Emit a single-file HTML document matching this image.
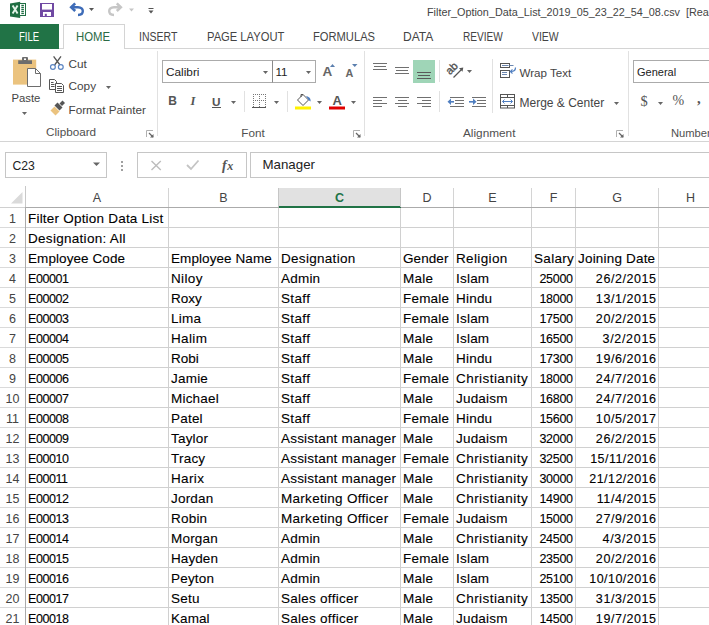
<!DOCTYPE html>
<html><head><meta charset="utf-8"><style>
html,body{margin:0;padding:0;}
body{width:709px;height:625px;overflow:hidden;position:relative;background:#fff;font-family:"Liberation Sans", sans-serif;}
.t{position:absolute;white-space:nowrap;font-family:"Liberation Sans", sans-serif;}
.c{-webkit-text-stroke:0.1px #000;}
.r{position:absolute;box-sizing:content-box;}
svg.ov{position:absolute;left:0;top:0;}
</style></head><body>
<div class="t" style="top:1.62px;height:20px;line-height:20px;font-size:11.5px;color:#444;left:426.5px;transform:scaleX(0.94);transform-origin:0 50%;">Filter_Option_Data_List_2019_05_23_22_54_08.csv&nbsp;&nbsp;[Read-Only] - Excel</div>
<div class="r" style="left:0px;top:48px;width:709px;height:1px;background:#D4D4D4;"></div>
<div class="r" style="left:0px;top:24px;width:59px;height:25px;background:#217346;"></div>
<div class="t" style="top:26.74px;height:20px;line-height:20px;font-size:12.3px;color:#fff;left:18.8px;transform:scaleX(0.777);transform-origin:0 50%;">FILE</div>
<div class="r" style="left:63px;top:24px;width:60px;height:24px;border:1px solid #D4D4D4;background:#fff;border-bottom:none;"></div>
<div class="t" style="top:26.74px;height:20px;line-height:20px;font-size:12.3px;color:#2B6A45;left:75.5px;transform:scaleX(0.924);transform-origin:0 50%;">HOME</div>
<div class="t" style="top:26.74px;height:20px;line-height:20px;font-size:12.3px;color:#444444;left:139.167px;transform:scaleX(0.854);transform-origin:0 50%;">INSERT</div>
<div class="t" style="top:26.74px;height:20px;line-height:20px;font-size:12.3px;color:#444444;left:207.112px;transform:scaleX(0.91);transform-origin:0 50%;">PAGE LAYOUT</div>
<div class="t" style="top:26.74px;height:20px;line-height:20px;font-size:12.3px;color:#444444;left:312.614px;transform:scaleX(0.908);transform-origin:0 50%;">FORMULAS</div>
<div class="t" style="top:26.74px;height:20px;line-height:20px;font-size:12.3px;color:#444444;left:402.545px;transform:scaleX(0.979);transform-origin:0 50%;">DATA</div>
<div class="t" style="top:26.74px;height:20px;line-height:20px;font-size:12.3px;color:#444444;left:462.698px;transform:scaleX(0.822);transform-origin:0 50%;">REVIEW</div>
<div class="t" style="top:26.74px;height:20px;line-height:20px;font-size:12.3px;color:#444444;left:531.672px;transform:scaleX(0.849);transform-origin:0 50%;">VIEW</div>
<div class="r" style="left:0px;top:141px;width:709px;height:1px;background:#D4D4D4;"></div>
<div class="t" style="top:87.68px;height:20px;line-height:20px;font-size:11.3px;color:#444444;left:11.5px;">Paste</div>
<div class="t" style="top:53.71px;height:20px;line-height:20px;font-size:11.8px;color:#444444;left:68.5px;">Cut</div>
<div class="t" style="top:76.41px;height:20px;line-height:20px;font-size:11.8px;color:#444444;left:68.5px;">Copy</div>
<div class="t" style="top:99.65px;height:20px;line-height:20px;font-size:11.7px;color:#444444;left:68.5px;">Format Painter</div>
<div class="t" style="top:122.45px;height:20px;line-height:20px;font-size:11.7px;color:#505050;left:46px;">Clipboard</div>
<div class="r" style="left:157px;top:51px;width:1px;height:85px;background:#E1E1E1;"></div>
<div class="r" style="left:162px;top:60px;width:109px;height:21px;border:1px solid #ABABAB;background:#fff;"></div>
<div class="r" style="left:272px;top:60px;width:42px;height:21px;border:1px solid #ABABAB;background:#fff;border-left-color:#8A8A8A;"></div>
<div class="t" style="top:61.61px;height:20px;line-height:20px;font-size:11.8px;color:#222;left:166px;">Calibri</div>
<div class="t" style="top:61.98px;height:20px;line-height:20px;font-size:11.6px;color:#222;left:275.5px;">11</div>
<div class="t" style="top:62.32px;height:20px;line-height:20px;font-size:13.5px;color:#666;font-weight:bold;left:322.5px;">A</div>
<div class="t" style="top:63.26px;height:20px;line-height:20px;font-size:10.8px;color:#666;font-weight:bold;left:345.5px;">A</div>
<div class="t" style="top:91.44px;height:20px;line-height:20px;font-size:12px;color:#555;font-weight:bold;left:168.3px;">B</div>
<div class="t" style="top:91.27px;height:20px;line-height:20px;font-size:12.5px;color:#555;font-family:'Liberation Serif', serif;left:190.5px;font-style:italic;font-weight:bold;">I</div>
<div class="t" style="top:91.51px;height:20px;line-height:20px;font-size:11.8px;color:#555;font-weight:bold;left:212px;">U</div>
<div class="r" style="left:212px;top:107px;width:9px;height:1px;background:#555;"></div>
<div class="r" style="left:244px;top:91px;width:1px;height:21px;background:#E1E1E1;"></div>
<div class="r" style="left:287px;top:91px;width:1px;height:21px;background:#E1E1E1;"></div>
<div class="t" style="top:91.10px;height:20px;line-height:20px;font-size:13px;color:#555;font-weight:bold;left:332.5px;">A</div>
<div class="t" style="top:122.65px;height:20px;line-height:20px;font-size:11.7px;color:#505050;left:241.3px;">Font</div>
<div class="r" style="left:364px;top:51px;width:1px;height:85px;background:#E1E1E1;"></div>
<div class="r" style="left:373px;top:63px;width:14px;height:1px;background:#707070;"></div>
<div class="r" style="left:374px;top:66px;width:12px;height:1px;background:#707070;"></div>
<div class="r" style="left:373px;top:69px;width:14px;height:1px;background:#707070;"></div>
<div class="r" style="left:395px;top:67px;width:14px;height:1px;background:#707070;"></div>
<div class="r" style="left:396px;top:70px;width:12px;height:1px;background:#707070;"></div>
<div class="r" style="left:395px;top:73px;width:14px;height:1px;background:#707070;"></div>
<div class="r" style="left:413px;top:60px;width:22px;height:23px;background:#9FD5B7;"></div>
<div class="r" style="left:417px;top:72px;width:14px;height:1px;background:#5A5A5A;"></div>
<div class="r" style="left:418px;top:75px;width:12px;height:1px;background:#5A5A5A;"></div>
<div class="r" style="left:417px;top:78px;width:14px;height:1px;background:#5A5A5A;"></div>
<div class="r" style="left:439px;top:60px;width:1px;height:22px;background:#E1E1E1;"></div>
<div class="r" style="left:373px;top:97px;width:14px;height:1px;background:#707070;"></div>
<div class="r" style="left:373px;top:100px;width:9px;height:1px;background:#707070;"></div>
<div class="r" style="left:373px;top:103px;width:14px;height:1px;background:#707070;"></div>
<div class="r" style="left:373px;top:106px;width:9px;height:1px;background:#707070;"></div>
<div class="r" style="left:395px;top:97px;width:14px;height:1px;background:#707070;"></div>
<div class="r" style="left:398px;top:100px;width:9px;height:1px;background:#707070;"></div>
<div class="r" style="left:395px;top:103px;width:14px;height:1px;background:#707070;"></div>
<div class="r" style="left:398px;top:106px;width:9px;height:1px;background:#707070;"></div>
<div class="r" style="left:417px;top:97px;width:14px;height:1px;background:#707070;"></div>
<div class="r" style="left:422px;top:100px;width:9px;height:1px;background:#707070;"></div>
<div class="r" style="left:417px;top:103px;width:14px;height:1px;background:#707070;"></div>
<div class="r" style="left:422px;top:106px;width:9px;height:1px;background:#707070;"></div>
<div class="r" style="left:439px;top:91px;width:1px;height:21px;background:#E1E1E1;"></div>
<div class="r" style="left:450px;top:97px;width:14px;height:1px;background:#707070;"></div>
<div class="r" style="left:455px;top:100px;width:9px;height:1px;background:#707070;"></div>
<div class="r" style="left:455px;top:103px;width:9px;height:1px;background:#707070;"></div>
<div class="r" style="left:450px;top:106px;width:14px;height:1px;background:#707070;"></div>
<div class="r" style="left:472px;top:97px;width:14px;height:1px;background:#707070;"></div>
<div class="r" style="left:477px;top:100px;width:9px;height:1px;background:#707070;"></div>
<div class="r" style="left:477px;top:103px;width:9px;height:1px;background:#707070;"></div>
<div class="r" style="left:472px;top:106px;width:14px;height:1px;background:#707070;"></div>
<div class="r" style="left:492px;top:59px;width:1px;height:54px;background:#E1E1E1;"></div>
<div class="t" style="top:62.58px;height:20px;line-height:20px;font-size:11.6px;color:#444444;left:519.5px;">Wrap Text</div>
<div class="t" style="top:93.34px;height:20px;line-height:20px;font-size:12px;color:#444444;left:519.5px;">Merge &amp; Center</div>
<div class="t" style="top:122.91px;height:20px;line-height:20px;font-size:11.8px;color:#505050;left:463px;">Alignment</div>
<div class="r" style="left:628px;top:51px;width:1px;height:85px;background:#E1E1E1;"></div>
<div class="r" style="left:633px;top:60px;width:126px;height:21px;border:1px solid #ABABAB;background:#fff;"></div>
<div class="t" style="top:61.99px;height:20px;line-height:20px;font-size:11px;color:#222;left:637px;">General</div>
<div class="t" style="top:90.98px;height:20px;line-height:20px;font-size:14.5px;color:#555;font-family:'Liberation Serif', serif;left:640.5px;">$</div>
<div class="t" style="top:90.95px;height:20px;line-height:20px;font-size:14px;color:#555;font-family:'Liberation Serif', serif;left:672.5px;">%</div>
<div class="t" style="top:87.80px;height:20px;line-height:20px;font-size:15px;color:#555;font-family:'Liberation Serif', serif;font-weight:bold;left:697px;">,</div>
<div class="t" style="top:122.72px;height:20px;line-height:20px;font-size:11.2px;color:#505050;left:671px;">Number</div>
<div class="r" style="left:5px;top:152px;width:100px;height:24px;border:1px solid #C6C6C6;background:#fff;"></div>
<div class="t" style="top:155.77px;height:20px;line-height:20px;font-size:12.2px;color:#222;left:12.5px;">C23</div>
<div class="r" style="left:121px;top:161px;width:2px;height:2px;background:#A0A0A0;"></div>
<div class="r" style="left:121px;top:165px;width:2px;height:2px;background:#A0A0A0;"></div>
<div class="r" style="left:121px;top:169px;width:2px;height:2px;background:#A0A0A0;"></div>
<div class="r" style="left:137px;top:152px;width:108px;height:24px;border:1px solid #C6C6C6;background:#fff;"></div>
<div class="t" style="left:222px;top:156px;height:20px;line-height:20px;font-family:'Liberation Serif',serif;font-style:italic;font-weight:bold;font-size:14px;color:#555">f<span style="font-size:12px;margin-left:0.5px">x</span></div>
<div class="r" style="left:250px;top:152px;width:509px;height:24px;border:1px solid #C6C6C6;background:#fff;"></div>
<div class="t" style="top:155.39px;height:20px;line-height:20px;font-size:13.3px;color:#222;left:262.5px;">Manager</div>
<div class="r" style="left:279px;top:188px;width:121px;height:18px;background:#E1E1E1;"></div>
<div class="r" style="left:279px;top:206px;width:122px;height:2px;background:#217346;"></div>
<div class="r" style="left:25px;top:207px;width:254px;height:1px;background:#ABABAB;"></div>
<div class="r" style="left:401px;top:207px;width:308px;height:1px;background:#ABABAB;"></div>
<div class="r" style="left:0px;top:207px;width:25px;height:1px;background:#D0D0D0;"></div>
<div class="r" style="left:168px;top:188px;width:1px;height:19px;background:#D4D4D4;"></div>
<div class="r" style="left:278px;top:188px;width:1px;height:19px;background:#C6C6C6;"></div>
<div class="r" style="left:400px;top:188px;width:1px;height:19px;background:#C6C6C6;"></div>
<div class="r" style="left:453px;top:188px;width:1px;height:19px;background:#D4D4D4;"></div>
<div class="r" style="left:531px;top:188px;width:1px;height:19px;background:#D4D4D4;"></div>
<div class="r" style="left:575px;top:188px;width:1px;height:19px;background:#D4D4D4;"></div>
<div class="r" style="left:658px;top:188px;width:1px;height:19px;background:#D4D4D4;"></div>
<div class="r" style="left:25px;top:186px;width:1px;height:21px;background:#C8C8C8;"></div>
<div class="r" style="left:25px;top:207px;width:1px;height:418px;background:#ABABAB;"></div>
<div class="t" style="top:187.67px;height:20px;line-height:20px;font-size:12.5px;color:#444;left:-3.0px;width:200px;text-align:center;">A</div>
<div class="t" style="top:187.67px;height:20px;line-height:20px;font-size:12.5px;color:#444;left:123.5px;width:200px;text-align:center;">B</div>
<div class="t" style="top:187.67px;height:20px;line-height:20px;font-size:12.5px;color:#217346;font-weight:bold;left:239.5px;width:200px;text-align:center;">C</div>
<div class="t" style="top:187.67px;height:20px;line-height:20px;font-size:12.5px;color:#444;left:327.0px;width:200px;text-align:center;">D</div>
<div class="t" style="top:187.67px;height:20px;line-height:20px;font-size:12.5px;color:#444;left:392.5px;width:200px;text-align:center;">E</div>
<div class="t" style="top:187.67px;height:20px;line-height:20px;font-size:12.5px;color:#444;left:453.5px;width:200px;text-align:center;">F</div>
<div class="t" style="top:187.67px;height:20px;line-height:20px;font-size:12.5px;color:#444;left:517.0px;width:200px;text-align:center;">G</div>
<div class="t" style="top:187.67px;height:20px;line-height:20px;font-size:12.5px;color:#444;left:590.5px;width:200px;text-align:center;">H</div>
<div class="r" style="left:0px;top:227px;width:25px;height:1px;background:#DADADA;"></div>
<div class="r" style="left:26px;top:227px;width:683px;height:1px;background:#D0D0D0;"></div>
<div class="r" style="left:0px;top:247px;width:25px;height:1px;background:#DADADA;"></div>
<div class="r" style="left:26px;top:247px;width:683px;height:1px;background:#D0D0D0;"></div>
<div class="r" style="left:0px;top:267px;width:25px;height:1px;background:#DADADA;"></div>
<div class="r" style="left:26px;top:267px;width:683px;height:1px;background:#D0D0D0;"></div>
<div class="r" style="left:0px;top:287px;width:25px;height:1px;background:#DADADA;"></div>
<div class="r" style="left:26px;top:287px;width:683px;height:1px;background:#D0D0D0;"></div>
<div class="r" style="left:0px;top:307px;width:25px;height:1px;background:#DADADA;"></div>
<div class="r" style="left:26px;top:307px;width:683px;height:1px;background:#D0D0D0;"></div>
<div class="r" style="left:0px;top:327px;width:25px;height:1px;background:#DADADA;"></div>
<div class="r" style="left:26px;top:327px;width:683px;height:1px;background:#D0D0D0;"></div>
<div class="r" style="left:0px;top:347px;width:25px;height:1px;background:#DADADA;"></div>
<div class="r" style="left:26px;top:347px;width:683px;height:1px;background:#D0D0D0;"></div>
<div class="r" style="left:0px;top:367px;width:25px;height:1px;background:#DADADA;"></div>
<div class="r" style="left:26px;top:367px;width:683px;height:1px;background:#D0D0D0;"></div>
<div class="r" style="left:0px;top:387px;width:25px;height:1px;background:#DADADA;"></div>
<div class="r" style="left:26px;top:387px;width:683px;height:1px;background:#D0D0D0;"></div>
<div class="r" style="left:0px;top:407px;width:25px;height:1px;background:#DADADA;"></div>
<div class="r" style="left:26px;top:407px;width:683px;height:1px;background:#D0D0D0;"></div>
<div class="r" style="left:0px;top:427px;width:25px;height:1px;background:#DADADA;"></div>
<div class="r" style="left:26px;top:427px;width:683px;height:1px;background:#D0D0D0;"></div>
<div class="r" style="left:0px;top:447px;width:25px;height:1px;background:#DADADA;"></div>
<div class="r" style="left:26px;top:447px;width:683px;height:1px;background:#D0D0D0;"></div>
<div class="r" style="left:0px;top:467px;width:25px;height:1px;background:#DADADA;"></div>
<div class="r" style="left:26px;top:467px;width:683px;height:1px;background:#D0D0D0;"></div>
<div class="r" style="left:0px;top:487px;width:25px;height:1px;background:#DADADA;"></div>
<div class="r" style="left:26px;top:487px;width:683px;height:1px;background:#D0D0D0;"></div>
<div class="r" style="left:0px;top:507px;width:25px;height:1px;background:#DADADA;"></div>
<div class="r" style="left:26px;top:507px;width:683px;height:1px;background:#D0D0D0;"></div>
<div class="r" style="left:0px;top:527px;width:25px;height:1px;background:#DADADA;"></div>
<div class="r" style="left:26px;top:527px;width:683px;height:1px;background:#D0D0D0;"></div>
<div class="r" style="left:0px;top:547px;width:25px;height:1px;background:#DADADA;"></div>
<div class="r" style="left:26px;top:547px;width:683px;height:1px;background:#D0D0D0;"></div>
<div class="r" style="left:0px;top:567px;width:25px;height:1px;background:#DADADA;"></div>
<div class="r" style="left:26px;top:567px;width:683px;height:1px;background:#D0D0D0;"></div>
<div class="r" style="left:0px;top:587px;width:25px;height:1px;background:#DADADA;"></div>
<div class="r" style="left:26px;top:587px;width:683px;height:1px;background:#D0D0D0;"></div>
<div class="r" style="left:0px;top:607px;width:25px;height:1px;background:#DADADA;"></div>
<div class="r" style="left:26px;top:607px;width:683px;height:1px;background:#D0D0D0;"></div>
<div class="r" style="left:0px;top:627px;width:25px;height:1px;background:#DADADA;"></div>
<div class="r" style="left:26px;top:627px;width:683px;height:1px;background:#D0D0D0;"></div>
<div class="r" style="left:168px;top:208px;width:1px;height:417px;background:#D0D0D0;"></div>
<div class="r" style="left:278px;top:208px;width:1px;height:417px;background:#D0D0D0;"></div>
<div class="r" style="left:400px;top:208px;width:1px;height:417px;background:#D0D0D0;"></div>
<div class="r" style="left:453px;top:208px;width:1px;height:417px;background:#D0D0D0;"></div>
<div class="r" style="left:531px;top:208px;width:1px;height:417px;background:#D0D0D0;"></div>
<div class="r" style="left:575px;top:208px;width:1px;height:417px;background:#D0D0D0;"></div>
<div class="r" style="left:658px;top:208px;width:1px;height:417px;background:#D0D0D0;"></div>
<div class="t" style="top:208.67px;height:20px;line-height:20px;font-size:12.5px;color:#444;left:-87.5px;width:200px;text-align:center;">1</div>
<div class="t" style="top:209.02px;height:20px;line-height:20px;font-size:13.5px;color:#000;letter-spacing:0.21px;left:28px;-webkit-text-stroke:0.1px #000;">Filter Option Data List</div>
<div class="t" style="top:228.67px;height:20px;line-height:20px;font-size:12.5px;color:#444;left:-87.5px;width:200px;text-align:center;">2</div>
<div class="t" style="top:229.02px;height:20px;line-height:20px;font-size:13.5px;color:#000;letter-spacing:0.291px;left:28px;-webkit-text-stroke:0.1px #000;">Designation: All</div>
<div class="t" style="top:248.67px;height:20px;line-height:20px;font-size:12.5px;color:#444;left:-87.5px;width:200px;text-align:center;">3</div>
<div class="t" style="top:249.02px;height:20px;line-height:20px;font-size:13.5px;color:#000;letter-spacing:0.084px;left:28px;-webkit-text-stroke:0.1px #000;">Employee Code</div>
<div class="t" style="top:249.02px;height:20px;line-height:20px;font-size:13.5px;color:#000;letter-spacing:0.084px;left:171px;-webkit-text-stroke:0.1px #000;">Employee Name</div>
<div class="t" style="top:249.02px;height:20px;line-height:20px;font-size:13.5px;color:#000;letter-spacing:0.295px;left:281px;-webkit-text-stroke:0.1px #000;">Designation</div>
<div class="t" style="top:249.02px;height:20px;line-height:20px;font-size:13.5px;color:#000;letter-spacing:0.08px;left:403px;-webkit-text-stroke:0.1px #000;">Gender</div>
<div class="t" style="top:249.02px;height:20px;line-height:20px;font-size:13.5px;color:#000;letter-spacing:0.357px;left:456px;-webkit-text-stroke:0.1px #000;">Religion</div>
<div class="t" style="top:249.02px;height:20px;line-height:20px;font-size:13.5px;color:#000;letter-spacing:0.32px;left:534px;-webkit-text-stroke:0.1px #000;">Salary</div>
<div class="t" style="top:249.02px;height:20px;line-height:20px;font-size:13.5px;color:#000;letter-spacing:0.187px;left:578px;-webkit-text-stroke:0.1px #000;">Joining Date</div>
<div class="t" style="top:268.67px;height:20px;line-height:20px;font-size:12.5px;color:#444;left:-87.5px;width:200px;text-align:center;">4</div>
<div class="t" style="top:268.67px;height:20px;line-height:20px;font-size:12.5px;color:#000;letter-spacing:-0.45px;left:28px;-webkit-text-stroke:0.1px #000;">E00001</div>
<div class="t" style="top:269.02px;height:20px;line-height:20px;font-size:13.5px;color:#000;letter-spacing:0.362px;left:171px;-webkit-text-stroke:0.1px #000;">Niloy</div>
<div class="t" style="top:269.02px;height:20px;line-height:20px;font-size:13.5px;color:#000;letter-spacing:0.212px;left:281px;-webkit-text-stroke:0.1px #000;">Admin</div>
<div class="t" style="top:269.02px;height:20px;line-height:20px;font-size:13.5px;color:#000;letter-spacing:0.233px;left:403px;-webkit-text-stroke:0.1px #000;">Male</div>
<div class="t" style="top:269.02px;height:20px;line-height:20px;font-size:13.5px;color:#000;letter-spacing:0.212px;left:456px;-webkit-text-stroke:0.1px #000;">Islam</div>
<div class="t" style="top:268.67px;height:20px;line-height:20px;font-size:12.5px;color:#000;letter-spacing:-0.29px;right:136px;margin-right:0.29px;-webkit-text-stroke:0.1px #000;">25000</div>
<div class="t" style="top:268.67px;height:20px;line-height:20px;font-size:12.5px;color:#000;letter-spacing:0.565px;right:53px;margin-right:-0.565px;-webkit-text-stroke:0.1px #000;">26/2/2015</div>
<div class="t" style="top:288.67px;height:20px;line-height:20px;font-size:12.5px;color:#444;left:-87.5px;width:200px;text-align:center;">5</div>
<div class="t" style="top:288.67px;height:20px;line-height:20px;font-size:12.5px;color:#000;letter-spacing:-0.45px;left:28px;-webkit-text-stroke:0.1px #000;">E00002</div>
<div class="t" style="top:289.02px;height:20px;line-height:20px;font-size:13.5px;color:#000;letter-spacing:0.033px;left:171px;-webkit-text-stroke:0.1px #000;">Roxy</div>
<div class="t" style="top:289.02px;height:20px;line-height:20px;font-size:13.5px;color:#000;letter-spacing:0.362px;left:281px;-webkit-text-stroke:0.1px #000;">Staff</div>
<div class="t" style="top:289.02px;height:20px;line-height:20px;font-size:13.5px;color:#000;letter-spacing:0.2px;left:403px;-webkit-text-stroke:0.1px #000;">Female</div>
<div class="t" style="top:289.02px;height:20px;line-height:20px;font-size:13.5px;color:#000;letter-spacing:0.212px;left:456px;-webkit-text-stroke:0.1px #000;">Hindu</div>
<div class="t" style="top:288.67px;height:20px;line-height:20px;font-size:12.5px;color:#000;letter-spacing:-0.29px;right:136px;margin-right:0.29px;-webkit-text-stroke:0.1px #000;">18000</div>
<div class="t" style="top:288.67px;height:20px;line-height:20px;font-size:12.5px;color:#000;letter-spacing:0.565px;right:53px;margin-right:-0.565px;-webkit-text-stroke:0.1px #000;">13/1/2015</div>
<div class="t" style="top:308.67px;height:20px;line-height:20px;font-size:12.5px;color:#444;left:-87.5px;width:200px;text-align:center;">6</div>
<div class="t" style="top:308.67px;height:20px;line-height:20px;font-size:12.5px;color:#000;letter-spacing:-0.45px;left:28px;-webkit-text-stroke:0.1px #000;">E00003</div>
<div class="t" style="top:309.02px;height:20px;line-height:20px;font-size:13.5px;color:#000;letter-spacing:0.233px;left:171px;-webkit-text-stroke:0.1px #000;">Lima</div>
<div class="t" style="top:309.02px;height:20px;line-height:20px;font-size:13.5px;color:#000;letter-spacing:0.362px;left:281px;-webkit-text-stroke:0.1px #000;">Staff</div>
<div class="t" style="top:309.02px;height:20px;line-height:20px;font-size:13.5px;color:#000;letter-spacing:0.2px;left:403px;-webkit-text-stroke:0.1px #000;">Female</div>
<div class="t" style="top:309.02px;height:20px;line-height:20px;font-size:13.5px;color:#000;letter-spacing:0.212px;left:456px;-webkit-text-stroke:0.1px #000;">Islam</div>
<div class="t" style="top:308.67px;height:20px;line-height:20px;font-size:12.5px;color:#000;letter-spacing:-0.29px;right:136px;margin-right:0.29px;-webkit-text-stroke:0.1px #000;">17500</div>
<div class="t" style="top:308.67px;height:20px;line-height:20px;font-size:12.5px;color:#000;letter-spacing:0.565px;right:53px;margin-right:-0.565px;-webkit-text-stroke:0.1px #000;">20/2/2015</div>
<div class="t" style="top:328.67px;height:20px;line-height:20px;font-size:12.5px;color:#444;left:-87.5px;width:200px;text-align:center;">7</div>
<div class="t" style="top:328.67px;height:20px;line-height:20px;font-size:12.5px;color:#000;letter-spacing:-0.45px;left:28px;-webkit-text-stroke:0.1px #000;">E00004</div>
<div class="t" style="top:329.02px;height:20px;line-height:20px;font-size:13.5px;color:#000;letter-spacing:0.362px;left:171px;-webkit-text-stroke:0.1px #000;">Halim</div>
<div class="t" style="top:329.02px;height:20px;line-height:20px;font-size:13.5px;color:#000;letter-spacing:0.362px;left:281px;-webkit-text-stroke:0.1px #000;">Staff</div>
<div class="t" style="top:329.02px;height:20px;line-height:20px;font-size:13.5px;color:#000;letter-spacing:0.233px;left:403px;-webkit-text-stroke:0.1px #000;">Male</div>
<div class="t" style="top:329.02px;height:20px;line-height:20px;font-size:13.5px;color:#000;letter-spacing:0.212px;left:456px;-webkit-text-stroke:0.1px #000;">Islam</div>
<div class="t" style="top:328.67px;height:20px;line-height:20px;font-size:12.5px;color:#000;letter-spacing:-0.29px;right:136px;margin-right:0.29px;-webkit-text-stroke:0.1px #000;">16500</div>
<div class="t" style="top:328.67px;height:20px;line-height:20px;font-size:12.5px;color:#000;letter-spacing:0.687px;right:53px;margin-right:-0.687px;-webkit-text-stroke:0.1px #000;">3/2/2015</div>
<div class="t" style="top:348.67px;height:20px;line-height:20px;font-size:12.5px;color:#444;left:-87.5px;width:200px;text-align:center;">8</div>
<div class="t" style="top:348.67px;height:20px;line-height:20px;font-size:12.5px;color:#000;letter-spacing:-0.45px;left:28px;-webkit-text-stroke:0.1px #000;">E00005</div>
<div class="t" style="top:349.02px;height:20px;line-height:20px;font-size:13.5px;color:#000;letter-spacing:0.033px;left:171px;-webkit-text-stroke:0.1px #000;">Robi</div>
<div class="t" style="top:349.02px;height:20px;line-height:20px;font-size:13.5px;color:#000;letter-spacing:0.362px;left:281px;-webkit-text-stroke:0.1px #000;">Staff</div>
<div class="t" style="top:349.02px;height:20px;line-height:20px;font-size:13.5px;color:#000;letter-spacing:0.233px;left:403px;-webkit-text-stroke:0.1px #000;">Male</div>
<div class="t" style="top:349.02px;height:20px;line-height:20px;font-size:13.5px;color:#000;letter-spacing:0.212px;left:456px;-webkit-text-stroke:0.1px #000;">Hindu</div>
<div class="t" style="top:348.67px;height:20px;line-height:20px;font-size:12.5px;color:#000;letter-spacing:-0.29px;right:136px;margin-right:0.29px;-webkit-text-stroke:0.1px #000;">17300</div>
<div class="t" style="top:348.67px;height:20px;line-height:20px;font-size:12.5px;color:#000;letter-spacing:0.565px;right:53px;margin-right:-0.565px;-webkit-text-stroke:0.1px #000;">19/6/2016</div>
<div class="t" style="top:368.67px;height:20px;line-height:20px;font-size:12.5px;color:#444;left:-87.5px;width:200px;text-align:center;">9</div>
<div class="t" style="top:368.67px;height:20px;line-height:20px;font-size:12.5px;color:#000;letter-spacing:-0.45px;left:28px;-webkit-text-stroke:0.1px #000;">E00006</div>
<div class="t" style="top:369.02px;height:20px;line-height:20px;font-size:13.5px;color:#000;letter-spacing:0.212px;left:171px;-webkit-text-stroke:0.1px #000;">Jamie</div>
<div class="t" style="top:369.02px;height:20px;line-height:20px;font-size:13.5px;color:#000;letter-spacing:0.362px;left:281px;-webkit-text-stroke:0.1px #000;">Staff</div>
<div class="t" style="top:369.02px;height:20px;line-height:20px;font-size:13.5px;color:#000;letter-spacing:0.2px;left:403px;-webkit-text-stroke:0.1px #000;">Female</div>
<div class="t" style="top:369.02px;height:20px;line-height:20px;font-size:13.5px;color:#000;letter-spacing:0.445px;left:456px;-webkit-text-stroke:0.1px #000;">Christianity</div>
<div class="t" style="top:368.67px;height:20px;line-height:20px;font-size:12.5px;color:#000;letter-spacing:-0.29px;right:136px;margin-right:0.29px;-webkit-text-stroke:0.1px #000;">18000</div>
<div class="t" style="top:368.67px;height:20px;line-height:20px;font-size:12.5px;color:#000;letter-spacing:0.565px;right:53px;margin-right:-0.565px;-webkit-text-stroke:0.1px #000;">24/7/2016</div>
<div class="t" style="top:388.67px;height:20px;line-height:20px;font-size:12.5px;color:#444;left:-87.5px;width:200px;text-align:center;">10</div>
<div class="t" style="top:388.67px;height:20px;line-height:20px;font-size:12.5px;color:#000;letter-spacing:-0.45px;left:28px;-webkit-text-stroke:0.1px #000;">E00007</div>
<div class="t" style="top:389.02px;height:20px;line-height:20px;font-size:13.5px;color:#000;letter-spacing:0.192px;left:171px;-webkit-text-stroke:0.1px #000;">Michael</div>
<div class="t" style="top:389.02px;height:20px;line-height:20px;font-size:13.5px;color:#000;letter-spacing:0.362px;left:281px;-webkit-text-stroke:0.1px #000;">Staff</div>
<div class="t" style="top:389.02px;height:20px;line-height:20px;font-size:13.5px;color:#000;letter-spacing:0.233px;left:403px;-webkit-text-stroke:0.1px #000;">Male</div>
<div class="t" style="top:389.02px;height:20px;line-height:20px;font-size:13.5px;color:#000;letter-spacing:0.192px;left:456px;-webkit-text-stroke:0.1px #000;">Judaism</div>
<div class="t" style="top:388.67px;height:20px;line-height:20px;font-size:12.5px;color:#000;letter-spacing:-0.29px;right:136px;margin-right:0.29px;-webkit-text-stroke:0.1px #000;">16800</div>
<div class="t" style="top:388.67px;height:20px;line-height:20px;font-size:12.5px;color:#000;letter-spacing:0.565px;right:53px;margin-right:-0.565px;-webkit-text-stroke:0.1px #000;">24/7/2016</div>
<div class="t" style="top:408.67px;height:20px;line-height:20px;font-size:12.5px;color:#444;left:-87.5px;width:200px;text-align:center;">11</div>
<div class="t" style="top:408.67px;height:20px;line-height:20px;font-size:12.5px;color:#000;letter-spacing:-0.45px;left:28px;-webkit-text-stroke:0.1px #000;">E00008</div>
<div class="t" style="top:409.02px;height:20px;line-height:20px;font-size:13.5px;color:#000;letter-spacing:0.212px;left:171px;-webkit-text-stroke:0.1px #000;">Patel</div>
<div class="t" style="top:409.02px;height:20px;line-height:20px;font-size:13.5px;color:#000;letter-spacing:0.362px;left:281px;-webkit-text-stroke:0.1px #000;">Staff</div>
<div class="t" style="top:409.02px;height:20px;line-height:20px;font-size:13.5px;color:#000;letter-spacing:0.2px;left:403px;-webkit-text-stroke:0.1px #000;">Female</div>
<div class="t" style="top:409.02px;height:20px;line-height:20px;font-size:13.5px;color:#000;letter-spacing:0.212px;left:456px;-webkit-text-stroke:0.1px #000;">Hindu</div>
<div class="t" style="top:408.67px;height:20px;line-height:20px;font-size:12.5px;color:#000;letter-spacing:-0.29px;right:136px;margin-right:0.29px;-webkit-text-stroke:0.1px #000;">15600</div>
<div class="t" style="top:408.67px;height:20px;line-height:20px;font-size:12.5px;color:#000;letter-spacing:0.565px;right:53px;margin-right:-0.565px;-webkit-text-stroke:0.1px #000;">10/5/2017</div>
<div class="t" style="top:428.67px;height:20px;line-height:20px;font-size:12.5px;color:#444;left:-87.5px;width:200px;text-align:center;">12</div>
<div class="t" style="top:428.67px;height:20px;line-height:20px;font-size:12.5px;color:#000;letter-spacing:-0.45px;left:28px;-webkit-text-stroke:0.1px #000;">E00009</div>
<div class="t" style="top:429.02px;height:20px;line-height:20px;font-size:13.5px;color:#000;letter-spacing:0.2px;left:171px;-webkit-text-stroke:0.1px #000;">Taylor</div>
<div class="t" style="top:429.02px;height:20px;line-height:20px;font-size:13.5px;color:#000;letter-spacing:0.197px;left:281px;-webkit-text-stroke:0.1px #000;">Assistant manager</div>
<div class="t" style="top:429.02px;height:20px;line-height:20px;font-size:13.5px;color:#000;letter-spacing:0.233px;left:403px;-webkit-text-stroke:0.1px #000;">Male</div>
<div class="t" style="top:429.02px;height:20px;line-height:20px;font-size:13.5px;color:#000;letter-spacing:0.192px;left:456px;-webkit-text-stroke:0.1px #000;">Judaism</div>
<div class="t" style="top:428.67px;height:20px;line-height:20px;font-size:12.5px;color:#000;letter-spacing:-0.29px;right:136px;margin-right:0.29px;-webkit-text-stroke:0.1px #000;">32000</div>
<div class="t" style="top:428.67px;height:20px;line-height:20px;font-size:12.5px;color:#000;letter-spacing:0.565px;right:53px;margin-right:-0.565px;-webkit-text-stroke:0.1px #000;">26/2/2015</div>
<div class="t" style="top:448.67px;height:20px;line-height:20px;font-size:12.5px;color:#444;left:-87.5px;width:200px;text-align:center;">13</div>
<div class="t" style="top:448.67px;height:20px;line-height:20px;font-size:12.5px;color:#000;letter-spacing:-0.45px;left:28px;-webkit-text-stroke:0.1px #000;">E00010</div>
<div class="t" style="top:449.02px;height:20px;line-height:20px;font-size:13.5px;color:#000;letter-spacing:0.212px;left:171px;-webkit-text-stroke:0.1px #000;">Tracy</div>
<div class="t" style="top:449.02px;height:20px;line-height:20px;font-size:13.5px;color:#000;letter-spacing:0.197px;left:281px;-webkit-text-stroke:0.1px #000;">Assistant manager</div>
<div class="t" style="top:449.02px;height:20px;line-height:20px;font-size:13.5px;color:#000;letter-spacing:0.2px;left:403px;-webkit-text-stroke:0.1px #000;">Female</div>
<div class="t" style="top:449.02px;height:20px;line-height:20px;font-size:13.5px;color:#000;letter-spacing:0.445px;left:456px;-webkit-text-stroke:0.1px #000;">Christianity</div>
<div class="t" style="top:448.67px;height:20px;line-height:20px;font-size:12.5px;color:#000;letter-spacing:-0.29px;right:136px;margin-right:0.29px;-webkit-text-stroke:0.1px #000;">32500</div>
<div class="t" style="top:448.67px;height:20px;line-height:20px;font-size:12.5px;color:#000;letter-spacing:0.47px;right:53px;margin-right:-0.47px;-webkit-text-stroke:0.1px #000;">15/11/2016</div>
<div class="t" style="top:468.67px;height:20px;line-height:20px;font-size:12.5px;color:#444;left:-87.5px;width:200px;text-align:center;">14</div>
<div class="t" style="top:468.67px;height:20px;line-height:20px;font-size:12.5px;color:#000;letter-spacing:-0.45px;left:28px;-webkit-text-stroke:0.1px #000;">E00011</div>
<div class="t" style="top:469.02px;height:20px;line-height:20px;font-size:13.5px;color:#000;letter-spacing:0.362px;left:171px;-webkit-text-stroke:0.1px #000;">Harix</div>
<div class="t" style="top:469.02px;height:20px;line-height:20px;font-size:13.5px;color:#000;letter-spacing:0.197px;left:281px;-webkit-text-stroke:0.1px #000;">Assistant manager</div>
<div class="t" style="top:469.02px;height:20px;line-height:20px;font-size:13.5px;color:#000;letter-spacing:0.233px;left:403px;-webkit-text-stroke:0.1px #000;">Male</div>
<div class="t" style="top:469.02px;height:20px;line-height:20px;font-size:13.5px;color:#000;letter-spacing:0.445px;left:456px;-webkit-text-stroke:0.1px #000;">Christianity</div>
<div class="t" style="top:468.67px;height:20px;line-height:20px;font-size:12.5px;color:#000;letter-spacing:-0.29px;right:136px;margin-right:0.29px;-webkit-text-stroke:0.1px #000;">30000</div>
<div class="t" style="top:468.67px;height:20px;line-height:20px;font-size:12.5px;color:#000;letter-spacing:0.47px;right:53px;margin-right:-0.47px;-webkit-text-stroke:0.1px #000;">21/12/2016</div>
<div class="t" style="top:488.67px;height:20px;line-height:20px;font-size:12.5px;color:#444;left:-87.5px;width:200px;text-align:center;">15</div>
<div class="t" style="top:488.67px;height:20px;line-height:20px;font-size:12.5px;color:#000;letter-spacing:-0.45px;left:28px;-webkit-text-stroke:0.1px #000;">E00012</div>
<div class="t" style="top:489.02px;height:20px;line-height:20px;font-size:13.5px;color:#000;letter-spacing:0.2px;left:171px;-webkit-text-stroke:0.1px #000;">Jordan</div>
<div class="t" style="top:489.02px;height:20px;line-height:20px;font-size:13.5px;color:#000;letter-spacing:0.288px;left:281px;-webkit-text-stroke:0.1px #000;">Marketing Officer</div>
<div class="t" style="top:489.02px;height:20px;line-height:20px;font-size:13.5px;color:#000;letter-spacing:0.233px;left:403px;-webkit-text-stroke:0.1px #000;">Male</div>
<div class="t" style="top:489.02px;height:20px;line-height:20px;font-size:13.5px;color:#000;letter-spacing:0.445px;left:456px;-webkit-text-stroke:0.1px #000;">Christianity</div>
<div class="t" style="top:488.67px;height:20px;line-height:20px;font-size:12.5px;color:#000;letter-spacing:-0.29px;right:136px;margin-right:0.29px;-webkit-text-stroke:0.1px #000;">14900</div>
<div class="t" style="top:488.67px;height:20px;line-height:20px;font-size:12.5px;color:#000;letter-spacing:0.565px;right:53px;margin-right:-0.565px;-webkit-text-stroke:0.1px #000;">11/4/2015</div>
<div class="t" style="top:508.67px;height:20px;line-height:20px;font-size:12.5px;color:#444;left:-87.5px;width:200px;text-align:center;">16</div>
<div class="t" style="top:508.67px;height:20px;line-height:20px;font-size:12.5px;color:#000;letter-spacing:-0.45px;left:28px;-webkit-text-stroke:0.1px #000;">E00013</div>
<div class="t" style="top:509.02px;height:20px;line-height:20px;font-size:13.5px;color:#000;letter-spacing:0.212px;left:171px;-webkit-text-stroke:0.1px #000;">Robin</div>
<div class="t" style="top:509.02px;height:20px;line-height:20px;font-size:13.5px;color:#000;letter-spacing:0.288px;left:281px;-webkit-text-stroke:0.1px #000;">Marketing Officer</div>
<div class="t" style="top:509.02px;height:20px;line-height:20px;font-size:13.5px;color:#000;letter-spacing:0.2px;left:403px;-webkit-text-stroke:0.1px #000;">Female</div>
<div class="t" style="top:509.02px;height:20px;line-height:20px;font-size:13.5px;color:#000;letter-spacing:0.192px;left:456px;-webkit-text-stroke:0.1px #000;">Judaism</div>
<div class="t" style="top:508.67px;height:20px;line-height:20px;font-size:12.5px;color:#000;letter-spacing:-0.29px;right:136px;margin-right:0.29px;-webkit-text-stroke:0.1px #000;">15000</div>
<div class="t" style="top:508.67px;height:20px;line-height:20px;font-size:12.5px;color:#000;letter-spacing:0.565px;right:53px;margin-right:-0.565px;-webkit-text-stroke:0.1px #000;">27/9/2016</div>
<div class="t" style="top:528.67px;height:20px;line-height:20px;font-size:12.5px;color:#444;left:-87.5px;width:200px;text-align:center;">17</div>
<div class="t" style="top:528.67px;height:20px;line-height:20px;font-size:12.5px;color:#000;letter-spacing:-0.45px;left:28px;-webkit-text-stroke:0.1px #000;">E00014</div>
<div class="t" style="top:529.02px;height:20px;line-height:20px;font-size:13.5px;color:#000;letter-spacing:0.2px;left:171px;-webkit-text-stroke:0.1px #000;">Morgan</div>
<div class="t" style="top:529.02px;height:20px;line-height:20px;font-size:13.5px;color:#000;letter-spacing:0.212px;left:281px;-webkit-text-stroke:0.1px #000;">Admin</div>
<div class="t" style="top:529.02px;height:20px;line-height:20px;font-size:13.5px;color:#000;letter-spacing:0.233px;left:403px;-webkit-text-stroke:0.1px #000;">Male</div>
<div class="t" style="top:529.02px;height:20px;line-height:20px;font-size:13.5px;color:#000;letter-spacing:0.445px;left:456px;-webkit-text-stroke:0.1px #000;">Christianity</div>
<div class="t" style="top:528.67px;height:20px;line-height:20px;font-size:12.5px;color:#000;letter-spacing:-0.29px;right:136px;margin-right:0.29px;-webkit-text-stroke:0.1px #000;">24500</div>
<div class="t" style="top:528.67px;height:20px;line-height:20px;font-size:12.5px;color:#000;letter-spacing:0.687px;right:53px;margin-right:-0.687px;-webkit-text-stroke:0.1px #000;">4/3/2015</div>
<div class="t" style="top:548.67px;height:20px;line-height:20px;font-size:12.5px;color:#444;left:-87.5px;width:200px;text-align:center;">18</div>
<div class="t" style="top:548.67px;height:20px;line-height:20px;font-size:12.5px;color:#000;letter-spacing:-0.45px;left:28px;-webkit-text-stroke:0.1px #000;">E00015</div>
<div class="t" style="top:549.02px;height:20px;line-height:20px;font-size:13.5px;color:#000;letter-spacing:0.08px;left:171px;-webkit-text-stroke:0.1px #000;">Hayden</div>
<div class="t" style="top:549.02px;height:20px;line-height:20px;font-size:13.5px;color:#000;letter-spacing:0.212px;left:281px;-webkit-text-stroke:0.1px #000;">Admin</div>
<div class="t" style="top:549.02px;height:20px;line-height:20px;font-size:13.5px;color:#000;letter-spacing:0.2px;left:403px;-webkit-text-stroke:0.1px #000;">Female</div>
<div class="t" style="top:549.02px;height:20px;line-height:20px;font-size:13.5px;color:#000;letter-spacing:0.212px;left:456px;-webkit-text-stroke:0.1px #000;">Islam</div>
<div class="t" style="top:548.67px;height:20px;line-height:20px;font-size:12.5px;color:#000;letter-spacing:-0.29px;right:136px;margin-right:0.29px;-webkit-text-stroke:0.1px #000;">23500</div>
<div class="t" style="top:548.67px;height:20px;line-height:20px;font-size:12.5px;color:#000;letter-spacing:0.565px;right:53px;margin-right:-0.565px;-webkit-text-stroke:0.1px #000;">20/2/2016</div>
<div class="t" style="top:568.67px;height:20px;line-height:20px;font-size:12.5px;color:#444;left:-87.5px;width:200px;text-align:center;">19</div>
<div class="t" style="top:568.67px;height:20px;line-height:20px;font-size:12.5px;color:#000;letter-spacing:-0.45px;left:28px;-webkit-text-stroke:0.1px #000;">E00016</div>
<div class="t" style="top:569.02px;height:20px;line-height:20px;font-size:13.5px;color:#000;letter-spacing:0.2px;left:171px;-webkit-text-stroke:0.1px #000;">Peyton</div>
<div class="t" style="top:569.02px;height:20px;line-height:20px;font-size:13.5px;color:#000;letter-spacing:0.212px;left:281px;-webkit-text-stroke:0.1px #000;">Admin</div>
<div class="t" style="top:569.02px;height:20px;line-height:20px;font-size:13.5px;color:#000;letter-spacing:0.233px;left:403px;-webkit-text-stroke:0.1px #000;">Male</div>
<div class="t" style="top:569.02px;height:20px;line-height:20px;font-size:13.5px;color:#000;letter-spacing:0.212px;left:456px;-webkit-text-stroke:0.1px #000;">Islam</div>
<div class="t" style="top:568.67px;height:20px;line-height:20px;font-size:12.5px;color:#000;letter-spacing:-0.29px;right:136px;margin-right:0.29px;-webkit-text-stroke:0.1px #000;">25100</div>
<div class="t" style="top:568.67px;height:20px;line-height:20px;font-size:12.5px;color:#000;letter-spacing:0.47px;right:53px;margin-right:-0.47px;-webkit-text-stroke:0.1px #000;">10/10/2016</div>
<div class="t" style="top:588.67px;height:20px;line-height:20px;font-size:12.5px;color:#444;left:-87.5px;width:200px;text-align:center;">20</div>
<div class="t" style="top:588.67px;height:20px;line-height:20px;font-size:12.5px;color:#000;letter-spacing:-0.45px;left:28px;-webkit-text-stroke:0.1px #000;">E00017</div>
<div class="t" style="top:589.02px;height:20px;line-height:20px;font-size:13.5px;color:#000;letter-spacing:0.233px;left:171px;-webkit-text-stroke:0.1px #000;">Setu</div>
<div class="t" style="top:589.02px;height:20px;line-height:20px;font-size:13.5px;color:#000;letter-spacing:0.263px;left:281px;-webkit-text-stroke:0.1px #000;">Sales officer</div>
<div class="t" style="top:589.02px;height:20px;line-height:20px;font-size:13.5px;color:#000;letter-spacing:0.233px;left:403px;-webkit-text-stroke:0.1px #000;">Male</div>
<div class="t" style="top:589.02px;height:20px;line-height:20px;font-size:13.5px;color:#000;letter-spacing:0.445px;left:456px;-webkit-text-stroke:0.1px #000;">Christianity</div>
<div class="t" style="top:588.67px;height:20px;line-height:20px;font-size:12.5px;color:#000;letter-spacing:-0.29px;right:136px;margin-right:0.29px;-webkit-text-stroke:0.1px #000;">13500</div>
<div class="t" style="top:588.67px;height:20px;line-height:20px;font-size:12.5px;color:#000;letter-spacing:0.565px;right:53px;margin-right:-0.565px;-webkit-text-stroke:0.1px #000;">31/3/2015</div>
<div class="t" style="top:608.67px;height:20px;line-height:20px;font-size:12.5px;color:#444;left:-87.5px;width:200px;text-align:center;">21</div>
<div class="t" style="top:608.67px;height:20px;line-height:20px;font-size:12.5px;color:#000;letter-spacing:-0.45px;left:28px;-webkit-text-stroke:0.1px #000;">E00018</div>
<div class="t" style="top:609.02px;height:20px;line-height:20px;font-size:13.5px;color:#000;letter-spacing:0.062px;left:171px;-webkit-text-stroke:0.1px #000;">Kamal</div>
<div class="t" style="top:609.02px;height:20px;line-height:20px;font-size:13.5px;color:#000;letter-spacing:0.263px;left:281px;-webkit-text-stroke:0.1px #000;">Sales officer</div>
<div class="t" style="top:609.02px;height:20px;line-height:20px;font-size:13.5px;color:#000;letter-spacing:0.233px;left:403px;-webkit-text-stroke:0.1px #000;">Male</div>
<div class="t" style="top:609.02px;height:20px;line-height:20px;font-size:13.5px;color:#000;letter-spacing:0.192px;left:456px;-webkit-text-stroke:0.1px #000;">Judaism</div>
<div class="t" style="top:608.67px;height:20px;line-height:20px;font-size:12.5px;color:#000;letter-spacing:-0.29px;right:136px;margin-right:0.29px;-webkit-text-stroke:0.1px #000;">14500</div>
<div class="t" style="top:608.67px;height:20px;line-height:20px;font-size:12.5px;color:#000;letter-spacing:0.565px;right:53px;margin-right:-0.565px;-webkit-text-stroke:0.1px #000;">19/7/2015</div>
<svg class="ov" width="709" height="625" viewBox="0 0 709 625">
<path d="M10 3.6 L20.2 1.8 V18 L10 16.4 Z" fill="#1F6E43"/>
<rect x="19.5" y="3.5" width="6" height="12" fill="#fff" stroke="#1F6E43" stroke-width="1"/>
<rect x="21.3" y="4.8" width="2.6" height="1.3" fill="#1F6E43"/>
<rect x="21.3" y="6.8" width="2.6" height="1.3" fill="#1F6E43"/>
<rect x="21.3" y="8.8" width="2.6" height="1.3" fill="#1F6E43"/>
<rect x="21.3" y="10.8" width="2.6" height="1.3" fill="#1F6E43"/>
<rect x="21.3" y="12.8" width="2.6" height="1.3" fill="#1F6E43"/>
<path d="M12.6 5.6 L17.6 13.6 M17.6 5.6 L12.6 13.6" stroke="#E6F4EA" stroke-width="1.9"/>
<rect x="40" y="3" width="14" height="14" fill="#7049A3"/>
<rect x="42" y="4" width="10" height="5.6" fill="#fff"/>
<rect x="43" y="12" width="8" height="4" fill="#fff"/>
<rect x="44.8" y="13.8" width="2" height="2.2" fill="#7049A3"/>
<path d="M72.5 7.2 H78 C81.3 7.2 82.8 9.2 82.8 11 C82.8 13 81.3 15 78 15" fill="none" stroke="#3E6CB8" stroke-width="2.4"/>
<path d="M75.2 3.4 L71.2 7.2 L75.2 11" fill="none" stroke="#3E6CB8" stroke-width="2.6"/>
<path d="M89 8 H94 L91.5 11 Z" fill="#555"/>
<path d="M119.5 7.2 H114 C110.7 7.2 109.2 9.2 109.2 11 C109.2 13 110.7 15 114 15" fill="none" stroke="#C6C6C6" stroke-width="2.4"/>
<path d="M116.8 3.4 L120.8 7.2 L116.8 11" fill="none" stroke="#C6C6C6" stroke-width="2.6"/>
<path d="M129 8.5 H134 L131.5 11.5 Z" fill="#C6C6C6"/>
<rect x="148.5" y="8" width="5" height="1" fill="#555"/>
<path d="M148.5 10.5 H153.5 L151.0 13.5 Z" fill="#555"/>
<rect x="13" y="59.6" width="23.2" height="25" fill="#EBC37F"/>
<path d="M18.2 60.3 H32 V64 H18.2 Z" fill="#6D6D6D"/>
<rect x="22" y="57" width="6" height="4" rx="1" fill="#6D6D6D"/>
<rect x="24" y="58.4" width="2" height="1.6" fill="#fff"/>
<path d="M27.5 68.5 H35.5 L40.5 73.5 V86.5 H27.5 Z" fill="#fff" stroke="#6D6D6D" stroke-width="1"/>
<path d="M35.5 68.5 V73.5 H40.5" fill="none" stroke="#6D6D6D" stroke-width="1"/>
<path d="M22 112 H27 L24.5 115 Z" fill="#666666"/>
<path d="M53.6 56.3 L60 65 M61 56.3 L54.6 65" stroke="#555" stroke-width="1.3"/>
<circle cx="52.9" cy="67" r="2.4" fill="none" stroke="#5A84C2" stroke-width="1.2"/>
<circle cx="60.8" cy="67" r="2.4" fill="none" stroke="#5A84C2" stroke-width="1.2"/>
<path d="M49.5 79.5 H54.5 L56.5 81.5 V89.5 H49.5 Z" fill="#fff" stroke="#555" stroke-width="1"/>
<path d="M51 82.5 H53.5 M51 84.5 H54.5 M51 86.5 H54.5" stroke="#555" stroke-width="1"/>
<path d="M55.5 83.5 H61.5 L63.5 85.5 V92.5 H55.5 Z" fill="#fff" stroke="#555" stroke-width="1"/>
<path d="M57 86.5 H62 M57 88.5 H62 M57 90.5 H62" stroke="#555" stroke-width="1"/>
<path d="M106 86 H111 L108.5 89 Z" fill="#666666"/>
<path d="M50.5 110.5 L54.5 106.5 L59.5 111.5 L55.5 115.5 Z" fill="#EBC37F"/>
<path d="M54.5 105.5 L57.5 102.5 L62.5 107.5 L59.5 110.5 Z" fill="#555"/>
<path d="M59.5 103.5 L62.5 100.5 L65 103 L62 106 Z" fill="#555"/>
<path d="M146.5 137 V130.5 H153" fill="none" stroke="#B0B0B0" stroke-width="1"/>
<path d="M149 133 L153 137" fill="none" stroke="#666" stroke-width="1.2"/>
<path d="M153.5 134 V137.5 H150 Z" fill="#666"/>
<path d="M263 71 H268 L265.5 74 Z" fill="#666666"/>
<path d="M306 71 H311 L308.5 74 Z" fill="#666666"/>
<path d="M330 67 H335 L332.5 64 Z" fill="#5B7FAE"/>
<path d="M352 64 H357.5 L354.75 67 Z" fill="#5B7FAE"/>
<path d="M231 101 H236 L233.5 104 Z" fill="#666666"/>
<rect x="253" y="94" width="1" height="1" fill="#777"/>
<rect x="253" y="100" width="1" height="1" fill="#777"/>
<rect x="253" y="94" width="1" height="1" fill="#777"/>
<rect x="259" y="94" width="1" height="1" fill="#777"/>
<rect x="265" y="94" width="1" height="1" fill="#777"/>
<rect x="255" y="94" width="1" height="1" fill="#777"/>
<rect x="255" y="100" width="1" height="1" fill="#777"/>
<rect x="253" y="96" width="1" height="1" fill="#777"/>
<rect x="259" y="96" width="1" height="1" fill="#777"/>
<rect x="265" y="96" width="1" height="1" fill="#777"/>
<rect x="257" y="94" width="1" height="1" fill="#777"/>
<rect x="257" y="100" width="1" height="1" fill="#777"/>
<rect x="253" y="98" width="1" height="1" fill="#777"/>
<rect x="259" y="98" width="1" height="1" fill="#777"/>
<rect x="265" y="98" width="1" height="1" fill="#777"/>
<rect x="259" y="94" width="1" height="1" fill="#777"/>
<rect x="259" y="100" width="1" height="1" fill="#777"/>
<rect x="253" y="100" width="1" height="1" fill="#777"/>
<rect x="259" y="100" width="1" height="1" fill="#777"/>
<rect x="265" y="100" width="1" height="1" fill="#777"/>
<rect x="261" y="94" width="1" height="1" fill="#777"/>
<rect x="261" y="100" width="1" height="1" fill="#777"/>
<rect x="253" y="102" width="1" height="1" fill="#777"/>
<rect x="259" y="102" width="1" height="1" fill="#777"/>
<rect x="265" y="102" width="1" height="1" fill="#777"/>
<rect x="263" y="94" width="1" height="1" fill="#777"/>
<rect x="263" y="100" width="1" height="1" fill="#777"/>
<rect x="253" y="104" width="1" height="1" fill="#777"/>
<rect x="259" y="104" width="1" height="1" fill="#777"/>
<rect x="265" y="104" width="1" height="1" fill="#777"/>
<rect x="265" y="94" width="1" height="1" fill="#777"/>
<rect x="265" y="100" width="1" height="1" fill="#777"/>
<rect x="253" y="106" width="1" height="1" fill="#777"/>
<rect x="259" y="106" width="1" height="1" fill="#777"/>
<rect x="265" y="106" width="1" height="1" fill="#777"/>
<rect x="252" y="107" width="14" height="1" fill="#555"/>
<path d="M274 101 H279 L276.5 104 Z" fill="#666666"/>
<path d="M297.5 100 L303 94.5 L308.5 100 L303 105.5 Z" fill="#fff" stroke="#555" stroke-width="1"/>
<path d="M301 97 V94.5 H303" fill="none" stroke="#555" stroke-width="1"/>
<path d="M306 96 C309 96.5 311 98.5 310.5 101.5 L308.5 100 Z" fill="#4F7EC0"/>
<rect x="295" y="106.5" width="16" height="3" fill="#FFF200"/>
<path d="M317 101 H322 L319.5 104 Z" fill="#666666"/>
<rect x="329" y="106.5" width="16" height="3" fill="#E00000"/>
<path d="M351 101 H356 L353.5 104 Z" fill="#666666"/>
<path d="M353.5 137 V130.5 H360" fill="none" stroke="#B0B0B0" stroke-width="1"/>
<path d="M356 133 L360 137" fill="none" stroke="#666" stroke-width="1.2"/>
<path d="M360.5 134 V137.5 H357 Z" fill="#666"/>
<text x="0" y="0" font-family="Liberation Sans" font-size="11" fill="#505050" stroke="#505050" stroke-width="0.35" transform="translate(450 75.3) rotate(-45)">ab</text>
<path d="M453.5 77.5 L461 70" stroke="#555" stroke-width="1.2"/>
<path d="M459 68.3 L463.3 67.5 L462.5 71.8 Z" fill="#555"/>
<path d="M467 70 H472 L469.5 73 Z" fill="#666666"/>
<path d="M447.5 101.8 L451 98.5 V105 Z" fill="#4F7EC0"/><rect x="450" y="101" width="4" height="1.6" fill="#4F7EC0"/>
<path d="M476.5 101.8 L473 98.5 V105 Z" fill="#4F7EC0"/><rect x="469" y="101" width="4.5" height="1.6" fill="#4F7EC0"/>
<rect x="500.5" y="63.5" width="9" height="4" fill="none" stroke="#555" stroke-width="1"/>
<path d="M502 65.5 H508.5 M509.5 65.5 H513.5" stroke="#6C87B0" stroke-width="1"/>
<rect x="500.5" y="70.5" width="9" height="7" fill="none" stroke="#555" stroke-width="1"/>
<path d="M502 72.5 H507 M502 74.5 H507" stroke="#6C87B0" stroke-width="1"/>
<path d="M515.5 67.5 C515.5 70 514 71.5 511 71.5" fill="none" stroke="#4F7EC0" stroke-width="1.2"/>
<path d="M512.5 69.5 L510.3 71.5 L512.5 73.5" fill="none" stroke="#4F7EC0" stroke-width="1.1"/>
<rect x="500.5" y="94.5" width="14" height="13.5" fill="none" stroke="#555" stroke-width="1"/>
<path d="M500.5 97.5 H514.5 M500.5 105.5 H514.5 M507.5 94.5 V97.5 M507.5 105.5 V108" stroke="#555" stroke-width="1"/>
<path d="M502.5 101.5 H512.5" stroke="#4F7EC0" stroke-width="1"/>
<path d="M504.5 99.5 L502.5 101.5 L504.5 103.5 M510.5 99.5 L512.5 101.5 L510.5 103.5" fill="none" stroke="#4F7EC0" stroke-width="1"/>
<path d="M614 102 H619 L616.5 105 Z" fill="#666666"/>
<path d="M616.5 137 V130.5 H623" fill="none" stroke="#B0B0B0" stroke-width="1"/>
<path d="M619 133 L623 137" fill="none" stroke="#666" stroke-width="1.2"/>
<path d="M623.5 134 V137.5 H620 Z" fill="#666"/>
<path d="M658 102 H663 L660.5 105 Z" fill="#666666"/>
<path d="M93 162.5 H100 L96.5 166 Z" fill="#666"/>
<path d="M151.5 161 L160.8 170 M160.8 161 L151.5 170" stroke="#BDBDBD" stroke-width="1.4"/>
<path d="M187 165 L191 169 L198.5 160.5" fill="none" stroke="#C4C4C4" stroke-width="1.8"/>
<path d="M22.5 192 V203.5 H11 Z" fill="#DADADA"/>
</svg>
</body></html>
